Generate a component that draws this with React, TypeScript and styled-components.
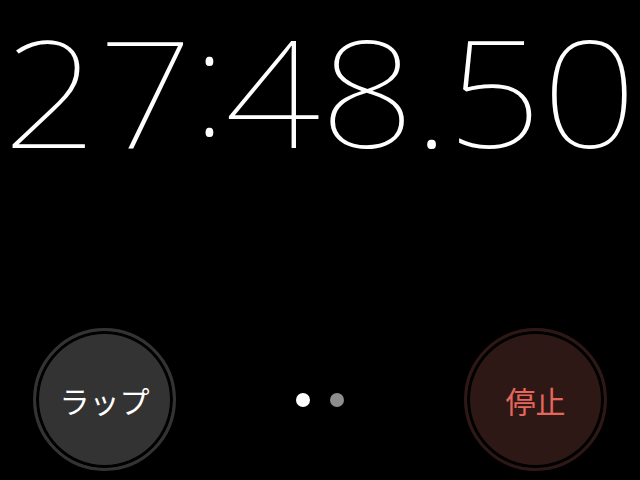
import React from "react";
import styled, { createGlobalStyle } from "styled-components";

const GlobalStyle = createGlobalStyle`
    html, body {
        margin: 0;
        padding: 0;
        background: #000;
    }
    #root {
        width: 640px;
        height: 480px;
    }
`;

const Screen = styled.div`
    width: 640px;
    height: 480px;
    background: #000;
    display: flex;
    flex-direction: column;
    justify-content: space-between;
    overflow: hidden;
`;

const Time = styled.div`
    display: flex;
    justify-content: center;
    padding-top: 17px;
    color: #fff;
    font-family: "Noto Sans", Inter, sans-serif;
    font-weight: 100;
    font-size: 148px;
    line-height: 148px;
`;

// stopwatch digits are tabular: every digit gets the same cell
const Cell = styled.span<{ $narrow?: boolean; $raise?: boolean }>`
    display: block;
    width: ${(p) => (p.$narrow ? 32 : 95)}px;
    text-align: center;
    transform: ${(p) => (p.$raise ? "translateY(-12px)" : "scaleX(1.13)")};
`;

const Controls = styled.div`
    display: flex;
    align-items: center;
    justify-content: space-between;
    padding: 0 33px 9px 33px;
`;

const RoundButton = styled.button<{ $bg: string; $fg: string }>`
    width: 143px;
    height: 143px;
    border-radius: 50%;
    border: 3px solid ${(p) => p.$bg};
    background: ${(p) => p.$bg};
    box-shadow: inset 0 0 0 3px #000;
    color: ${(p) => p.$fg};
    font-family: "Noto Sans CJK JP", "Noto Sans", sans-serif;
    font-size: 30px;
    padding: 0;
    display: flex;
    align-items: center;
    justify-content: center;
`;

const Pager = styled.div`
    display: flex;
    gap: 20px;
`;

const Dot = styled.span<{ $active?: boolean }>`
    width: 14px;
    height: 14px;
    border-radius: 50%;
    background: ${(p) => (p.$active ? "#fff" : "#8e8e8e")};
`;

const chars = "27:48.50".split("");

export default function App() {
    return (
        <Screen>
            <GlobalStyle />
            <Time>
                {chars.map((c, i) => (
                    <Cell
                        key={i}
                        $narrow={c === ":" || c === "."}
                        $raise={c === ":"}
                    >
                        {c}
                    </Cell>
                ))}
            </Time>
            <Controls>
                <RoundButton $bg="#333333" $fg="#ffffff">ラップ</RoundButton>
                <Pager>
                    <Dot $active />
                    <Dot />
                </Pager>
                <RoundButton $bg="#2e1816" $fg="#e5675c">停止</RoundButton>
            </Controls>
        </Screen>
    );
}
